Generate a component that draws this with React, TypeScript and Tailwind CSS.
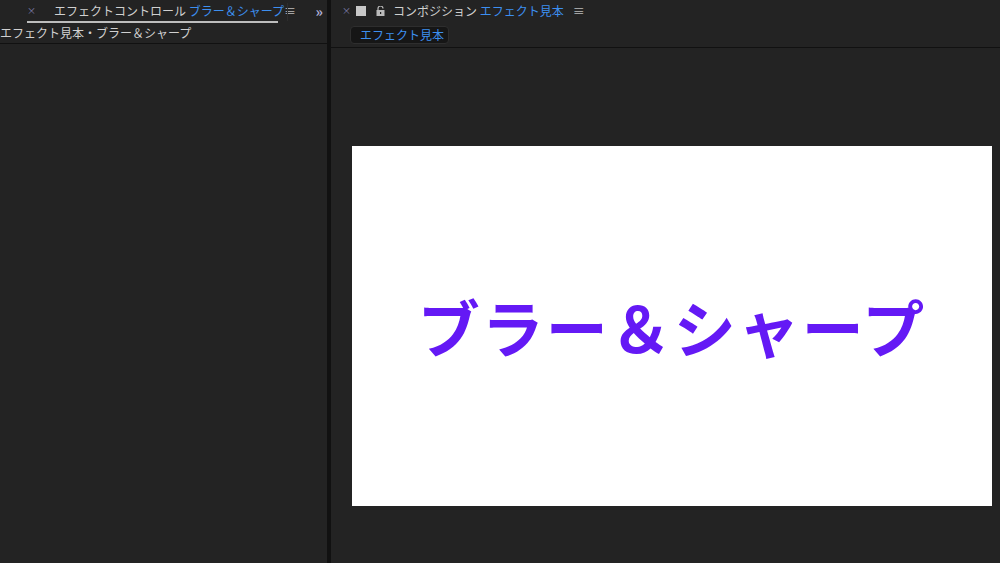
const Lock = () => (
  <svg width="9" height="10" viewBox="0 0 9 10"><path d="M2 4V2.5a2.5 2.5 0 0 1 5 0" fill="none" stroke="#bbb" strokeWidth="1.2"/><rect x="0.5" y="4" width="8" height="6" fill="#bbb"/><rect x="4" y="6" width="1.2" height="2" fill="#222"/></svg>
);
export default function App() {
  const f = { fontFamily: '"Noto Sans CJK JP", "Noto Sans", sans-serif' };
  return (
    <div className="w-[1000px] h-[563px] bg-[#232323] flex text-[12px] text-[#d0d0d0] overflow-hidden" style={f}>
      <div className="w-[327px] flex flex-col">
        <div className="h-[23px] flex items-center">
          <div className="ml-[27px] w-[251px] h-[23px] flex items-center border-b-2 border-[#bdbdbd]">
            <span className="text-[9px] text-[#8080b0] w-[15px]">×</span>
            <span className="w-[10px] h-[10px] bg-[#a84040] mr-[10px]"></span>
            <Lock />
            <span className="ml-[8px] whitespace-nowrap">エフェクトコントロール <span className="text-[#3d8ff0]">ブラー＆シャープ</span></span>
            <span className="ml-auto mr-[0px] text-[#bbb]">≡</span>
          </div>
          <div className="ml-[9px] w-px h-[18px] bg-[#2d2d2d]"></div>
          <span className="ml-auto mr-[4px] text-[#b0b0d8] font-bold text-[14px]">»</span>
        </div>
        <div className="h-[21px] flex items-center border-b border-[#111] whitespace-nowrap">エフェクト見本・ブラー＆シャープ</div>
      </div>
      <div className="w-[4px] bg-[#111]"></div>
      <div className="flex-1 flex flex-col">
        <div className="h-[22px] flex items-center pl-[11px]">
          <span className="text-[9px] text-[#8080b0] w-[14px]">×</span>
          <span className="w-[10px] h-[10px] bg-[#c8c8c8] mr-[10px]"></span>
          <Lock />
          <span className="ml-[8px] whitespace-nowrap">コンポジション <span className="text-[#3d8ff0]">エフェクト見本</span></span>
          <span className="ml-[9px] text-[#bbb]">≡</span>
        </div>
        <div className="h-[26px] flex items-center border-b border-[#111]">
          <div className="ml-[19px] w-[99px] h-[18px] bg-[#161616] border border-[#2e2e2e] rounded-sm text-[#3d8ff0] pl-[9px] leading-[16px]">エフェクト見本</div>
        </div>
        <div className="flex-1 pl-[21px] pt-[98px]">
          <div className="w-[640px] h-[360px] bg-white flex items-center justify-center">
            <span className="text-[62px] font-bold text-[#6419f5] tracking-[2px]">ブラー＆シャープ</span>
          </div>
        </div>
      </div>
    </div>
  );
}
